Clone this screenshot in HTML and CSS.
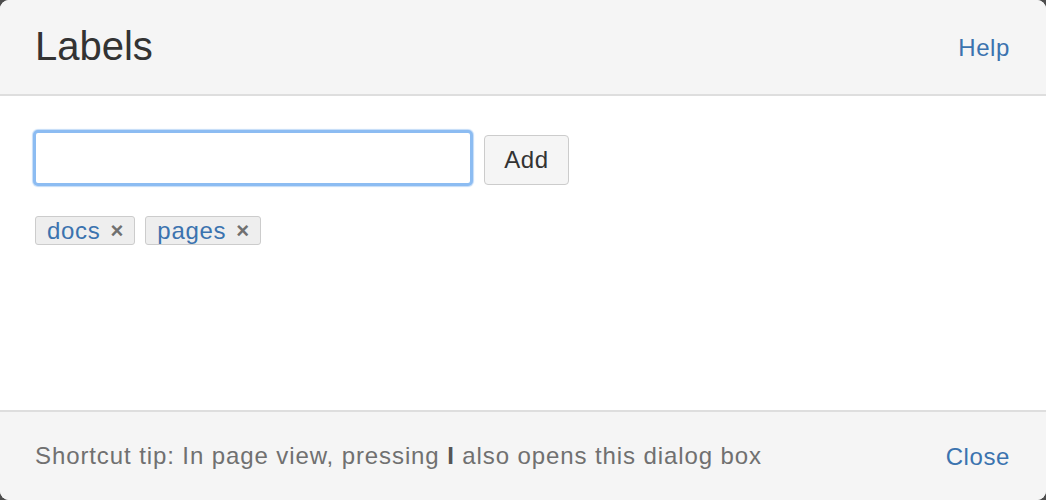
FILE: index.html
```html
<!DOCTYPE html>
<html>
<head>
<meta charset="utf-8">
<link rel="stylesheet" href="styles.css">
</head>
<body>
<div class="dialog">
  <header class="dialog-header">
    <h1 class="dialog-title">Labels</h1>
    <a class="link" href="#">Help</a>
  </header>
  <main class="dialog-body">
    <form class="add-form">
      <input class="label-input" type="text">
      <button class="add-btn" type="button">Add</button>
    </form>
    <ul class="tags">
      <li class="tag"><span class="tag-name">docs</span><span class="tag-x">×</span></li>
      <li class="tag"><span class="tag-name">pages</span><span class="tag-x">×</span></li>
    </ul>
  </main>
  <footer class="dialog-footer">
    <p class="tip">Shortcut tip: In page view, pressing <b>I</b> also opens this dialog box</p>
    <a class="link" href="#">Close</a>
  </footer>
</div>
</body>
</html>
```

FILE: styles.css
```css
html, body {
  margin: 0;
  padding: 0;
  height: 100%;
  background: #4d4d4d;
}
body {
  font-family: "Liberation Sans", Arial, sans-serif;
}
.dialog {
  width: 1046px;
  height: 500px;
  background: #fff;
  border-radius: 9px;
  overflow: hidden;
  display: flex;
  flex-direction: column;
}
.dialog-header {
  height: 94px;
  flex: none;
  background: #f5f5f5;
  border-bottom: 2px solid #dedede;
  display: flex;
  align-items: center;
  justify-content: space-between;
  padding: 0 36px 0 35px;
}
.dialog-title {
  margin: 0;
  font-weight: normal;
  font-size: 40px;
  color: #333;
  padding-bottom: 2px;
}
.link {
  color: #3b73af;
  text-decoration: none;
  font-size: 24px;
  letter-spacing: 0.6px;
  padding-top: 2px;
}
.dialog-body {
  flex: 1;
  padding: 34px 33px 0;
}
.add-form {
  display: flex;
  align-items: center;
  gap: 11px;
  margin: 0;
}
.label-input {
  width: 440px;
  height: 56px;
  box-sizing: border-box;
  border: 3px solid #8cbcf2;
  border-radius: 5px;
  background: #fff;
  margin: 0;
  outline: none;
  box-shadow: 0 0 1px 1px #c4dcf8;
}
.add-btn {
  width: 85px;
  height: 50px;
  box-sizing: border-box;
  margin-top: 4px;
  background: #f5f5f5;
  border: 1px solid #cccccc;
  border-radius: 4px;
  font-family: "Liberation Sans", Arial, sans-serif;
  font-size: 24px;
  letter-spacing: 0.6px;
  color: #333;
  padding: 0;
}
.tags {
  list-style: none;
  margin: 30px 0 0 2px;
  padding: 0;
  display: flex;
  gap: 10px;
}
.tag {
  display: flex;
  align-items: center;
  height: 29px;
  box-sizing: border-box;
  border: 1px solid #cccccc;
  border-radius: 3px;
  background: #eeeeee;
  padding: 0 11px 0 11px;
  gap: 10px;
}
.tag-name {
  color: #3b73af;
  font-size: 24px;
  letter-spacing: 0.7px;
  line-height: 1;
}
.tag-x {
  color: #707070;
  font-size: 22px;
  font-weight: bold;
  line-height: 1;
}
.dialog-footer {
  height: 88px;
  flex: none;
  background: #f5f5f5;
  border-top: 2px solid #dedede;
  display: flex;
  align-items: center;
  justify-content: space-between;
  padding: 0 36px 0 35px;
}
.tip {
  margin: 0;
  color: #707070;
  font-size: 24px;
  letter-spacing: 0.9px;
}
.tip b {
  color: #555;
}
```
